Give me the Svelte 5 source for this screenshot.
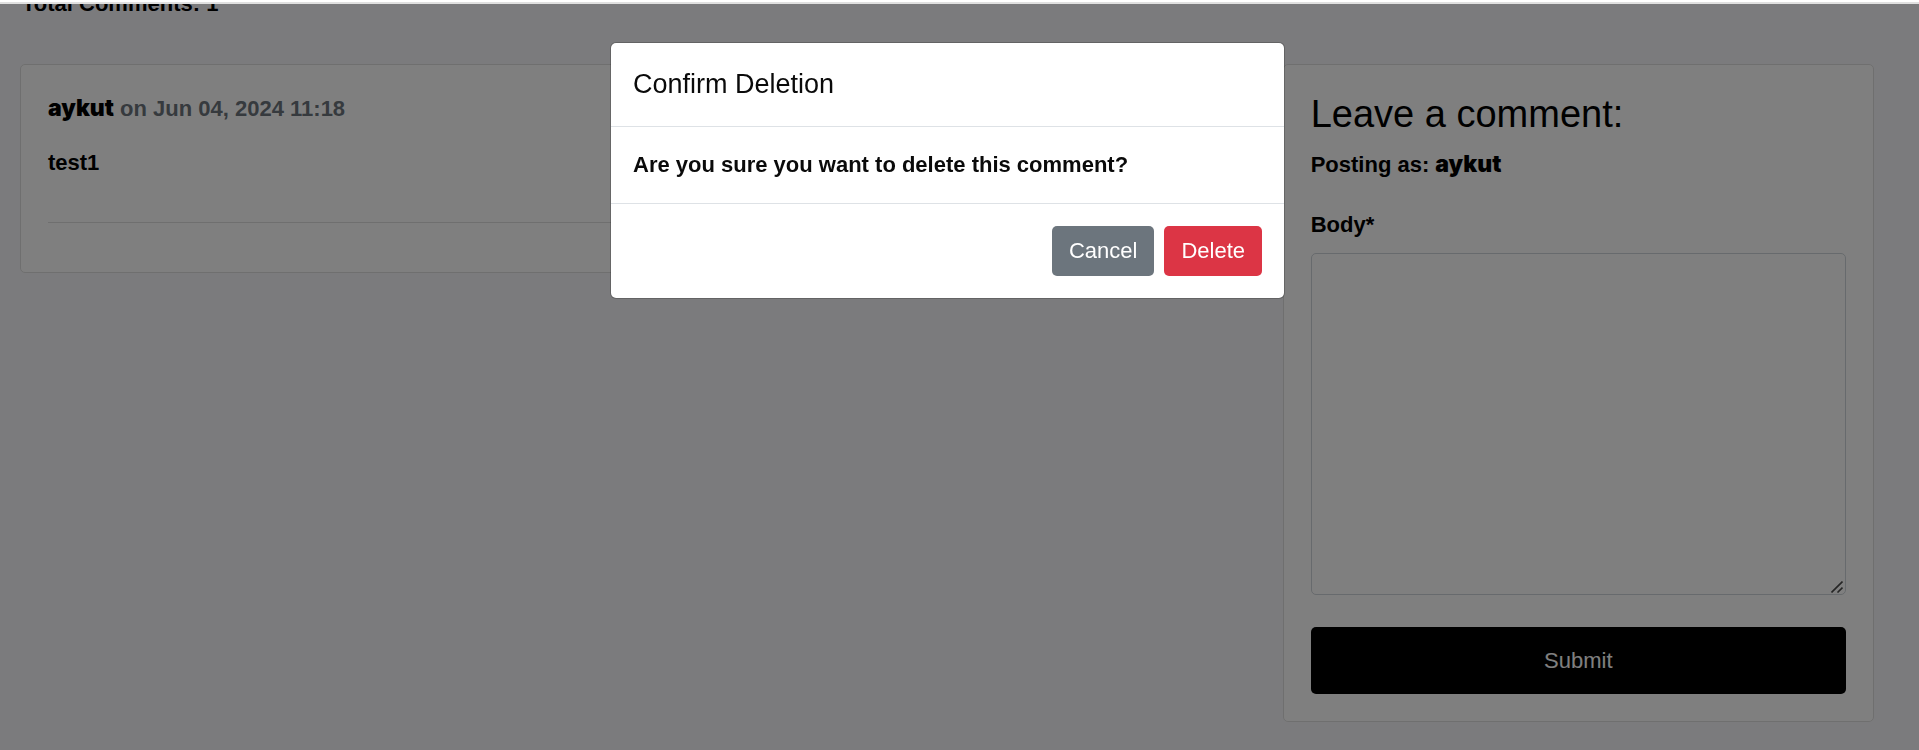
<script>
  let body = $state('');
</script>

<div class="top-strip"></div>

<main class="page">
  <h3 class="total">Total Comments: 1</h3>
  <div class="row">
    <div class="column">
      <section class="card comments">
        <p class="meta"><span class="author">aykut</span> on Jun 04, 2024 11:18</p>
        <p class="text">test1</p>
        <hr />
      </section>
    </div>
    <div class="column">
      <section class="card form-card">
        <h2>Leave a comment:</h2>
        <p class="posting">Posting as: <span class="author">aykut</span></p>
        <form onsubmit={(event) => event.preventDefault()}>
          <label for="body">Body*</label>
          <div class="field">
            <textarea id="body" rows="10" bind:value={body}></textarea>
            <svg class="grip" width="12" height="12" viewBox="0 0 12 12" aria-hidden="true">
              <path d="M.5 11.5 11.5.5M6.5 11.5l5-5" fill="none" stroke="#4a4a4a" stroke-width="1.6" />
            </svg>
          </div>
          <button class="submit" type="submit">Submit</button>
        </form>
      </section>
    </div>
  </div>
</main>

<div class="backdrop"></div>
<div class="modal-layer">
  <div class="modal" role="dialog" aria-modal="true" aria-labelledby="modal-title">
    <header><h5 id="modal-title">Confirm Deletion</h5></header>
    <p class="question">Are you sure you want to delete this comment?</p>
    <footer>
      <button class="cancel" type="button">Cancel</button>
      <button class="delete" type="button">Delete</button>
    </footer>
  </div>
</div>

<style>
  :global(body) {
    background: #f7f7fa;
    overflow: hidden;
  }

  * {
    box-sizing: border-box;
  }

  .top-strip {
    position: fixed;
    inset: 0 0 auto;
    z-index: 2;
    height: 4px;
    background: #fff;
    border-bottom: 2px solid #e0e0e0;
  }

  .page,
  .modal-layer {
    font: 600 22px/32px "Liberation Sans", Arial, sans-serif;
    color: #000;
  }

  .page {
    padding-right: 25px;
  }

  .total {
    margin: -12px 0 44px 22px;
    font: inherit;
  }

  .row {
    display: grid;
    grid-template-columns: 2fr 1fr;
    align-items: start;
  }

  .column {
    padding: 0 20px;
  }

  .card {
    padding: 27px;
    background: #fff;
    border: 1px solid #dfdfdf;
    border-radius: 5px;
  }

  .author {
    font-family: "Arial Black", Inter, sans-serif;
    font-size: 23px;
    font-weight: 900;
    color: #000;
  }

  p {
    margin: 0;
  }

  .meta {
    margin-bottom: 22px;
    color: #6c757d;
  }

  .comments {
    padding-bottom: 49px;
  }

  hr {
    margin: 43px 0 0;
    border: 0;
    border-top: 1px solid #dfdfdf;
  }

  h2 {
    margin: 0 0 12px;
    font-size: 38px;
    font-weight: 400;
    line-height: 44px;
  }

  .posting {
    margin-bottom: 28px;
  }

  label {
    display: block;
    margin-bottom: 12px;
  }

  .field {
    position: relative;
    margin-bottom: 32px;
  }

  textarea {
    display: block;
    width: 100%;
    height: 342px;
    padding: 8px 16px;
    background: #fff;
    border: 1px solid #ced4da;
    border-radius: 5px;
    font: inherit;
    font-weight: 400;
    resize: vertical;
  }

  textarea::-webkit-resizer {
    background: transparent;
  }

  .grip {
    position: absolute;
    right: 3px;
    bottom: 2px;
    pointer-events: none;
  }

  button {
    border: 0;
    border-radius: 5px;
    color: #fff;
    font: inherit;
    font-weight: 400;
    cursor: pointer;
  }

  .submit {
    display: block;
    width: 100%;
    padding: 17px;
    line-height: 33px;
    background: #000;
  }

  .backdrop {
    position: fixed;
    inset: 4px 0 0;
    background: rgba(0, 0, 0, 0.5);
  }

  .modal-layer {
    position: fixed;
    inset: 0;
    padding: 42px 24px 0 0;
  }

  .modal {
    max-width: 675px;
    margin: 0 auto;
    background: #fff;
    background-clip: padding-box;
    border: 1px solid rgba(0, 0, 0, 0.2);
    border-radius: 6px;
    color: #0a0a0a;
  }

  header {
    padding: 22px;
    border-bottom: 1px solid #dee2e6;
  }

  h5 {
    margin: 0;
    font-size: 27px;
    font-weight: 400;
    line-height: 39px;
  }

  .question {
    padding: 22px;
  }

  footer {
    display: flex;
    justify-content: flex-end;
    gap: 10px;
    padding: 22px;
    border-top: 1px solid #dee2e6;
  }

  footer button {
    padding: 9px 17px;
  }

  .cancel {
    background: #6c757d;
  }

  .delete {
    background: #dc3545;
  }
</style>
